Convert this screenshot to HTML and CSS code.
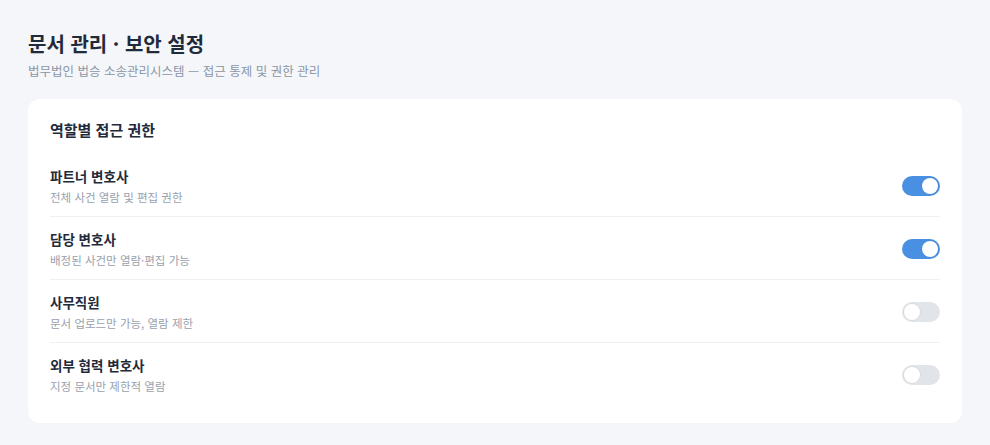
FILE: index.html
```html
<!DOCTYPE html>
<html lang="ko">
<head>
  <meta charset="UTF-8">
  <meta name="viewport" content="width=device-width, initial-scale=1.0">
  <title>문서 관리 · 보안 설정</title>
  <link rel="stylesheet" href="styles.css">
</head>
<body>
  <div class="page">
    <h1 class="page-title">문서 관리 · 보안 설정</h1>
    <p class="page-desc">법무법인 법승 소송관리시스템 — 접근 통제 및 권한 관리</p>

    <div class="card">
      <h2 class="card-title">역할별 접근 권한</h2>
      <div class="perm-row">
        <div class="perm-info">
          <div class="perm-name">파트너 변호사</div>
          <div class="perm-desc">전체 사건 열람 및 편집 권한</div>
        </div>
        <span class="switch on"><i class="knob"></i></span>
      </div>
      <div class="perm-row">
        <div class="perm-info">
          <div class="perm-name">담당 변호사</div>
          <div class="perm-desc">배정된 사건만 열람·편집 가능</div>
        </div>
        <span class="switch on"><i class="knob"></i></span>
      </div>
      <div class="perm-row">
        <div class="perm-info">
          <div class="perm-name">사무직원</div>
          <div class="perm-desc">문서 업로드만 가능, 열람 제한</div>
        </div>
        <span class="switch"><i class="knob"></i></span>
      </div>
      <div class="perm-row">
        <div class="perm-info">
          <div class="perm-name">외부 협력 변호사</div>
          <div class="perm-desc">지정 문서만 제한적 열람</div>
        </div>
        <span class="switch"><i class="knob"></i></span>
      </div>
    </div>
  </div>
</body>
</html>
```

FILE: styles.css
```css
body{
  margin: 0;
  background: #f5f6fa;
  font-family: "Noto Sans CJK KR", "Noto Sans", sans-serif;
  color: #1f2b3b;
}
.page{
  padding: 30px 28px 22px;
}
.page-title{
  margin: 0;
  font-size: 20px;
  line-height: 28px;
  font-weight: 700;
  color: #1f2b3b;
}
.page-desc{
  margin: 3px 0 0;
  font-size: 12.5px;
  line-height: 20px;
  color: #8a96a6;
}

.card{
  margin-top: 18px;
  padding: 20px 22px 18px;
  background: #fff;
  border-radius: 12px;
}
.card-title{
  margin: 0 0 13px;
  font-size: 15px;
  line-height: 22px;
  font-weight: 700;
  color: #1f2b3b;
}
.perm-row{
  display: flex;
  align-items: center;
  justify-content: space-between;
  padding: 12px 0 11px;
  border-bottom: 1px solid #eef0f3;
}
.perm-row:last-child{
  border-bottom: none;
}
.perm-name{
  font-size: 13.5px;
  line-height: 20px;
  font-weight: 700;
  color: #1f2b3b;
}
.perm-desc{
  margin-top: 3px;
  font-size: 11.5px;
  line-height: 16px;
  color: #98a1ad;
}

/* 토글 스위치 */
.switch{
  position: relative;
  box-sizing: border-box;
  width: 38px;
  height: 20px;
  border-radius: 10px;
  background: #e1e4e9;
}
.switch.on{
  background: #4a90e2;
}
.knob{
  position: absolute;
  top: 2px;
  left: 2px;
  width: 16px;
  height: 16px;
  border-radius: 50%;
  background: #fff;
  box-shadow: 0 0 0 1px rgba(0, 0, 0, 0.04);
}
.switch.on .knob{
  left: 20px;
}
```
